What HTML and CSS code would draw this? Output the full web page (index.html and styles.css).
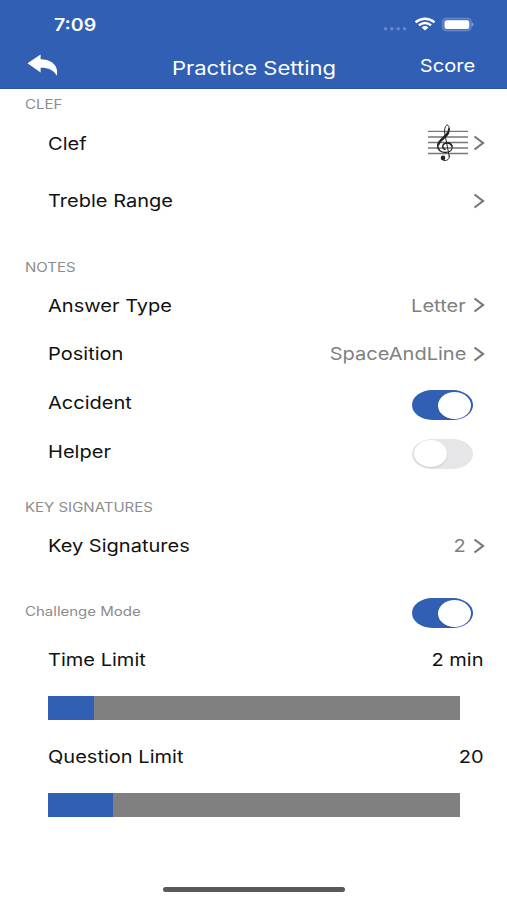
FILE: index.html
```html
<!DOCTYPE html>
<html lang="en">
<head>
    <meta charset="UTF-8">
    <meta name="viewport" content="width=device-width, initial-scale=1.0">
    <title>Practice Setting</title>
    <link rel="stylesheet" href="styles.css">
</head>
<body>
    <header>
        <div class="status">
            <span class="time">7:09</span>
            <svg class="status-icons" width="92" height="16" viewBox="0 0 92 16">
                <g fill="#6587c9">
                    <circle cx="3.5" cy="12.7" r="1.8"/>
                    <circle cx="9.8" cy="12.7" r="1.8"/>
                    <circle cx="16.2" cy="12.7" r="1.8"/>
                    <circle cx="22.5" cy="12.7" r="1.8"/>
                </g>
                <g fill="none" stroke="#fff" stroke-width="2.3">
                    <path d="M33.5 6.2Q43 -0.8 52.5 6.2"/>
                    <path d="M36.9 9.2Q43 4.7 49.1 9.2"/>
                </g>
                <path d="M39.6 11.4Q43 8.8 46.4 11.4L43 14.4Z" fill="#fff"/>
                <rect x="60.3" y="2.2" width="29" height="12.6" rx="4" fill="#4b74c1" stroke="#6f8fd0"/>
                <rect x="62.5" y="4.2" width="24.8" height="8.8" rx="2.2" fill="#fff"/>
                <path d="M90.2 6.3Q93 8.5 90.2 10.7Z" fill="#8ba6dc"/>
            </svg>
        </div>
        <div class="nav">
            <svg class="back" width="32" height="24" viewBox="0 0 32 24">
                <path d="M0.5 9.3L13.6 0.5V5.2C24 5.2 32.4 11.5 29.6 21.8C27 16.2 21 13.6 13.6 13.8V18.6Z" fill="#fff"/>
            </svg>
            <h1>Practice Setting</h1>
            <a class="score" href="#">Score</a>
        </div>
    </header>

    <main>
        <h2>CLEF</h2>
        <div class="row row-clef">
            <span class="name">Clef</span>
            <svg class="staff" width="40" height="38" viewBox="0 0 40 38">
                <path d="M0 7.4H40M0 13H40M0 18.5H40M0 24H40M0 29.5H40" stroke="#777" stroke-width="1.4"/>
                <g fill="none" stroke="#222" stroke-linecap="round">
                    <path d="M21.3 32.6L16.7 9C16.2 4.5 17.5 1.2 19.3 0.9C21.6 2 22 6.5 20.2 9.6" stroke-width="1"/>
                    <path d="M20.9 4.5C21.2 11.5 9.8 15 9.7 22C9.7 26 13 28.5 17.5 28.4" stroke-width="1.5"/>
                    <path d="M20.2 9C18 13.5 11.5 15.5 10.4 20.5" stroke-width="2.2"/>
                    <path d="M17.5 28.4C22 28.4 24.5 26 24.2 22.8C23.8 20 21.8 18.7 19 18.8" stroke-width="1.1"/>
                    <path d="M23.8 22C22.6 18.3 16.5 18 15 21.3C14.3 23.3 15.3 24.8 17 25.5" stroke-width="1.5"/>
                    <path d="M21.3 32C22 36.5 16 38 14.2 35.4" stroke-width="1"/>
                </g>
                <circle cx="15" cy="33.9" r="2.3" fill="#222"/>
            </svg>
            <svg class="chevron" width="12" height="16" viewBox="0 0 12 16"><path d="M1.5 1.5L10 8L1.5 14.5"/></svg>
        </div>
        <div class="row">
            <span class="name">Treble Range</span>
            <svg class="chevron" width="12" height="16" viewBox="0 0 12 16"><path d="M1.5 1.5L10 8L1.5 14.5"/></svg>
        </div>

        <h2 class="notes">NOTES</h2>
        <div class="row">
            <span class="name">Answer Type</span>
            <span class="value">Letter</span>
            <svg class="chevron" width="12" height="16" viewBox="0 0 12 16"><path d="M1.5 1.5L10 8L1.5 14.5"/></svg>
        </div>
        <div class="row">
            <span class="name">Position</span>
            <span class="value">SpaceAndLine</span>
            <svg class="chevron" width="12" height="16" viewBox="0 0 12 16"><path d="M1.5 1.5L10 8L1.5 14.5"/></svg>
        </div>
        <div class="row">
            <span class="name">Accident</span>
            <span class="toggle on"></span>
        </div>
        <div class="row">
            <span class="name">Helper</span>
            <span class="toggle"></span>
        </div>

        <h2 class="keys">KEY SIGNATURES</h2>
        <div class="row">
            <span class="name">Key Signatures</span>
            <span class="value">2</span>
            <svg class="chevron" width="12" height="16" viewBox="0 0 12 16"><path d="M1.5 1.5L10 8L1.5 14.5"/></svg>
        </div>

        <div class="row challenge">
            <h2 class="mode">Challenge Mode</h2>
            <span class="toggle on"></span>
        </div>
        <div class="row">
            <span class="name">Time Limit</span>
            <span class="limit">2 min</span>
        </div>
        <div class="bar"><div class="fill" style="width: 46px"></div></div>
        <div class="row">
            <span class="name">Question Limit</span>
            <span class="limit">20</span>
        </div>
        <div class="bar"><div class="fill" style="width: 65px"></div></div>
    </main>

    <div class="home"></div>
</body>
</html>
```
FILE: styles.css
```css
* {
    box-sizing: border-box;
}
body {
    margin: 0;
    height: 900px;
    display: flex;
    flex-direction: column;
    overflow: hidden;
    font-family: Inter, "Liberation Sans", sans-serif;
    font-size: 17.5px;
    line-height: 24px;
    color: #111;
    background-color: #fff;
}
header {
    height: 89px;
    background-color: #305fb3;
    border-bottom: 1px solid #2b57a6;
    color: #fff;
}
.status {
    height: 44px;
    padding: 4px 33px 0 54px;
    display: flex;
    align-items: center;
    justify-content: space-between;
}
.time {
    padding-top: 2px;
    font-size: 17px;
    font-weight: 600;
    transform: scaleX(1.15);
    transform-origin: left;
}
.status-icons {
    margin-top: -1px;
}
.nav {
    height: 44px;
    padding: 0 27px;
    display: grid;
    grid-template-columns: 1fr auto 1fr;
    align-items: center;
}
h1 {
    margin: 4px 0 0;
    font-size: 18.5px;
    font-weight: 400;
    transform: scaleX(1.19);
}
.score {
    margin-right: 5px;
    justify-self: end;
    color: #fff;
    text-decoration: none;
    font-size: 17.5px;
    transform: scaleX(1.15);
    transform-origin: right;
}
main {
    flex: 1;
}
h2 {
    width: fit-content;
    margin: 0 0 0 25px;
    height: 30px;
    line-height: 32px;
    font-size: 12.5px;
    font-weight: 400;
    color: #8c8c8c;
    transform: scaleX(1.2);
    transform-origin: left;
}
.notes {
    margin-top: 27px;
    height: 29px;
}
.keys {
    margin-top: 16px;
    line-height: 33px;
}
.row {
    height: 48.6px;
    padding: 0 22px 0 48px;
    display: flex;
    align-items: center;
}
.row-clef {
    height: 48px;
    margin-bottom: 9.5px;
}
.name {
    margin-right: auto;
    padding-top: 1px;
    transform: scaleX(1.145);
    transform-origin: left;
}
.value {
    margin-right: 7px;
    padding-top: 1px;
    color: #808080;
    transform: scaleX(1.145);
    transform-origin: right;
}
.limit {
    margin-right: 1px;
    padding-top: 1px;
    transform: scaleX(1.145);
    transform-origin: right;
}
.staff {
    margin-right: 5px;
}
.chevron {
    fill: none;
    stroke: #777;
    stroke-width: 2.2;
}
.toggle {
    width: 61px;
    height: 30px;
    margin: 5px 12px 0 0;
    padding: 1.5px 2px;
    display: flex;
    border-radius: 20px / 15px;
    background-color: #e6e6e8;
}
.toggle::before {
    content: "";
    width: 33px;
    height: 27px;
    border-radius: 50%;
    background-color: #fff;
    box-shadow: 0 1px 2px rgba(0, 0, 0, 0.12);
}
.toggle.on {
    justify-content: flex-end;
    background-color: #305fb3;
}
.challenge {
    margin-top: 16.5px;
    padding-left: 25px;
}
.mode {
    margin: 0 auto 0 0;
}
.bar {
    width: 412px;
    height: 24px;
    margin: 12px 0 12.5px 48px;
    background-color: #808080;
}
.fill {
    height: 24px;
    background-color: #305fb3;
}
.home {
    width: 182px;
    height: 5px;
    margin: 0 auto 8px;
    border-radius: 3px;
    background-color: #595959;
}
```
